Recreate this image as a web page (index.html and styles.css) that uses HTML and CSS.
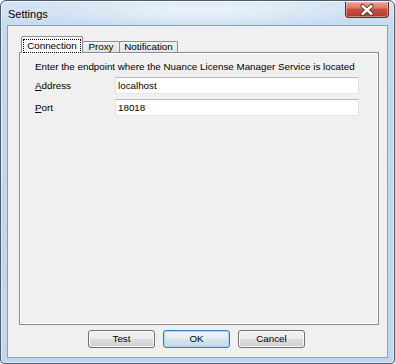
FILE: index.html
```html
<!DOCTYPE html>
<html>
<head>
<meta charset="utf-8">
<title>Settings</title>
<link rel="stylesheet" href="styles.css">
</head>
<body>
<div class="window">
  <div class="titlebar">
    <span class="title">Settings</span>
    <div class="close">
      <svg width="44" height="16" viewBox="0 0 44 16">
        <path d="M17.5 4 L26.5 12 M26.5 4 L17.5 12" stroke="#4a2a26" stroke-width="4.2" stroke-linecap="round" fill="none"/>
        <path d="M17.5 4 L26.5 12 M26.5 4 L17.5 12" stroke="#ffffff" stroke-width="2.4" stroke-linecap="round" fill="none"/>
      </svg>
    </div>
  </div>
  <div class="client">
    <div class="tabs">
      <div class="tab selected"><span class="focus">Connection</span></div>
      <div class="tab proxy">Proxy</div>
      <div class="tab notification">Notification</div>
    </div>
    <div class="panel">
      <p class="intro">Enter the endpoint where the Nuance License Manager Service is located</p>
      <div class="form">
        <label class="lbl"><u>A</u>ddress</label>
        <input class="field" type="text" value="localhost">
        <label class="lbl"><u>P</u>ort</label>
        <input class="field" type="text" value="18018">
      </div>
    </div>
    <div class="buttons">
      <button class="btn">Test</button>
      <button class="btn default">OK</button>
      <button class="btn">Cancel</button>
    </div>
  </div>
</div>
</body>
</html>
```
FILE: styles.css
```css
html, body {
  margin: 0;
  padding: 0;
}
body {
  width: 395px;
  height: 364px;
  overflow: hidden;
  background: #ffffff;
  font-family: "Liberation Sans", Arial, sans-serif;
  font-size: 9.8px;
  color: #000;
}
.window {
  box-sizing: border-box;
  width: 395px;
  height: 364px;
  border: 1px solid #4d5b6a;
  border-radius: 6px 6px 4px 4px;
  background:
    radial-gradient(ellipse 170px 18px at 200px 10px, rgba(255,255,255,0.6), rgba(255,255,255,0) 100%),
    linear-gradient(#d5e5f5 0, #c3d9ef 8%, #c0d6ec 100%);
  box-shadow: inset 0 0 0 1px rgba(255,255,255,0.55);
  display: flex;
  flex-direction: column;
  padding: 0 6px 5px 6px;
}
.titlebar {
  height: 24px;
  display: flex;
  align-items: flex-start;
  margin-right: -1px;
}
.title {
  font-size: 11px;
  line-height: 13px;
  margin-top: 7px;
  margin-left: 1px;
  color: #000;
  text-shadow: 0 0 6px rgba(255,255,255,0.9);
}
.close {
  margin-left: auto;
  margin-top: 1px;
  box-sizing: border-box;
  width: 44px;
  height: 16px;
  border: 1px solid #6e2a22;
  border-top: none;
  border-radius: 0 0 4px 4px;
  background: linear-gradient(#eaa293 0, #d97a68 40%, #c8503e 50%, #b6362a 100%);
  box-shadow: inset 0 0 0 1px rgba(255,200,190,0.5);
  display: flex;
  align-items: center;
  justify-content: center;
}
.close svg {
  display: block;
  margin: -1px;
}
.client {
  flex: 1;
  border: 1px solid #8aa0b7;
  background: #f0f0f0;
  display: flex;
  flex-direction: column;
  padding: 10px 8px 9px 11px;
}
.tabs {
  display: flex;
  align-items: flex-end;
  height: 16px;
  padding-left: 2px;
}
.tab {
  box-sizing: border-box;
  height: 11px;
  border: 1px solid #898c95;
  border-bottom: none;
  border-radius: 2px 2px 0 0;
  background: linear-gradient(#f4f4f4, #e3e3e3);
  line-height: 10px;
  text-align: center;
  margin-left: -1px;
  white-space: nowrap;
}
.tab.selected {
  position: relative;
  z-index: 1;
  width: 62px;
  height: 17px;
  margin-left: 0;
  margin-bottom: -1px;
  padding: 1px 1px 0 1px;
  background: #fbfbfb;
}
.focus {
  display: block;
  box-sizing: border-box;
  margin-top: 1px;
  height: 14px;
  border: 1px dotted #000;
  line-height: 12px;
}
.proxy {
  width: 38px;
}
.notification {
  width: 59px;
}
.panel {
  box-sizing: border-box;
  height: 273px;
  border: 1px solid #898c95;
  box-shadow: inset 1px 1px 0 #ffffff, inset -1px -1px 0 #ffffff;
  background: #f0f0f0;
  padding: 7px 0 0 15px;
}
.intro {
  margin: 0;
  line-height: 13px;
  white-space: nowrap;
}
.form {
  display: grid;
  grid-template-columns: 80px 244px;
  row-gap: 5px;
  margin-top: 4px;
}
.lbl {
  padding-top: 2px;
  line-height: 13px;
}
.field {
  box-sizing: border-box;
  height: 17px;
  margin: 0;
  padding: 0 2px;
  border: 1px solid;
  border-color: #b7bac1 #dde1e7 #e3e9ef #dde1e7;
  background: #fff;
  font: inherit;
  color: #000;
  outline: none;
}
.buttons {
  display: flex;
  gap: 8px;
  margin-top: 5px;
  padding-left: 69px;
}
.btn {
  box-sizing: border-box;
  width: 67px;
  height: 18px;
  padding: 0;
  margin: 0;
  border: 1px solid #707070;
  border-radius: 3px;
  background: linear-gradient(#f2f2f2 0, #ebebeb 50%, #dddddd 50%, #cfcfcf 100%);
  box-shadow: inset 0 0 0 1px #fafafa;
  font: inherit;
  color: #000;
  line-height: 14px;
}
.btn.default {
  border-color: #3c7fb1;
  background: linear-gradient(#eef4f8 0, #e4edf3 50%, #d6e3ec 50%, #c9d9e4 100%);
  box-shadow: inset 0 0 0 1px #9fd7f3;
}
```
